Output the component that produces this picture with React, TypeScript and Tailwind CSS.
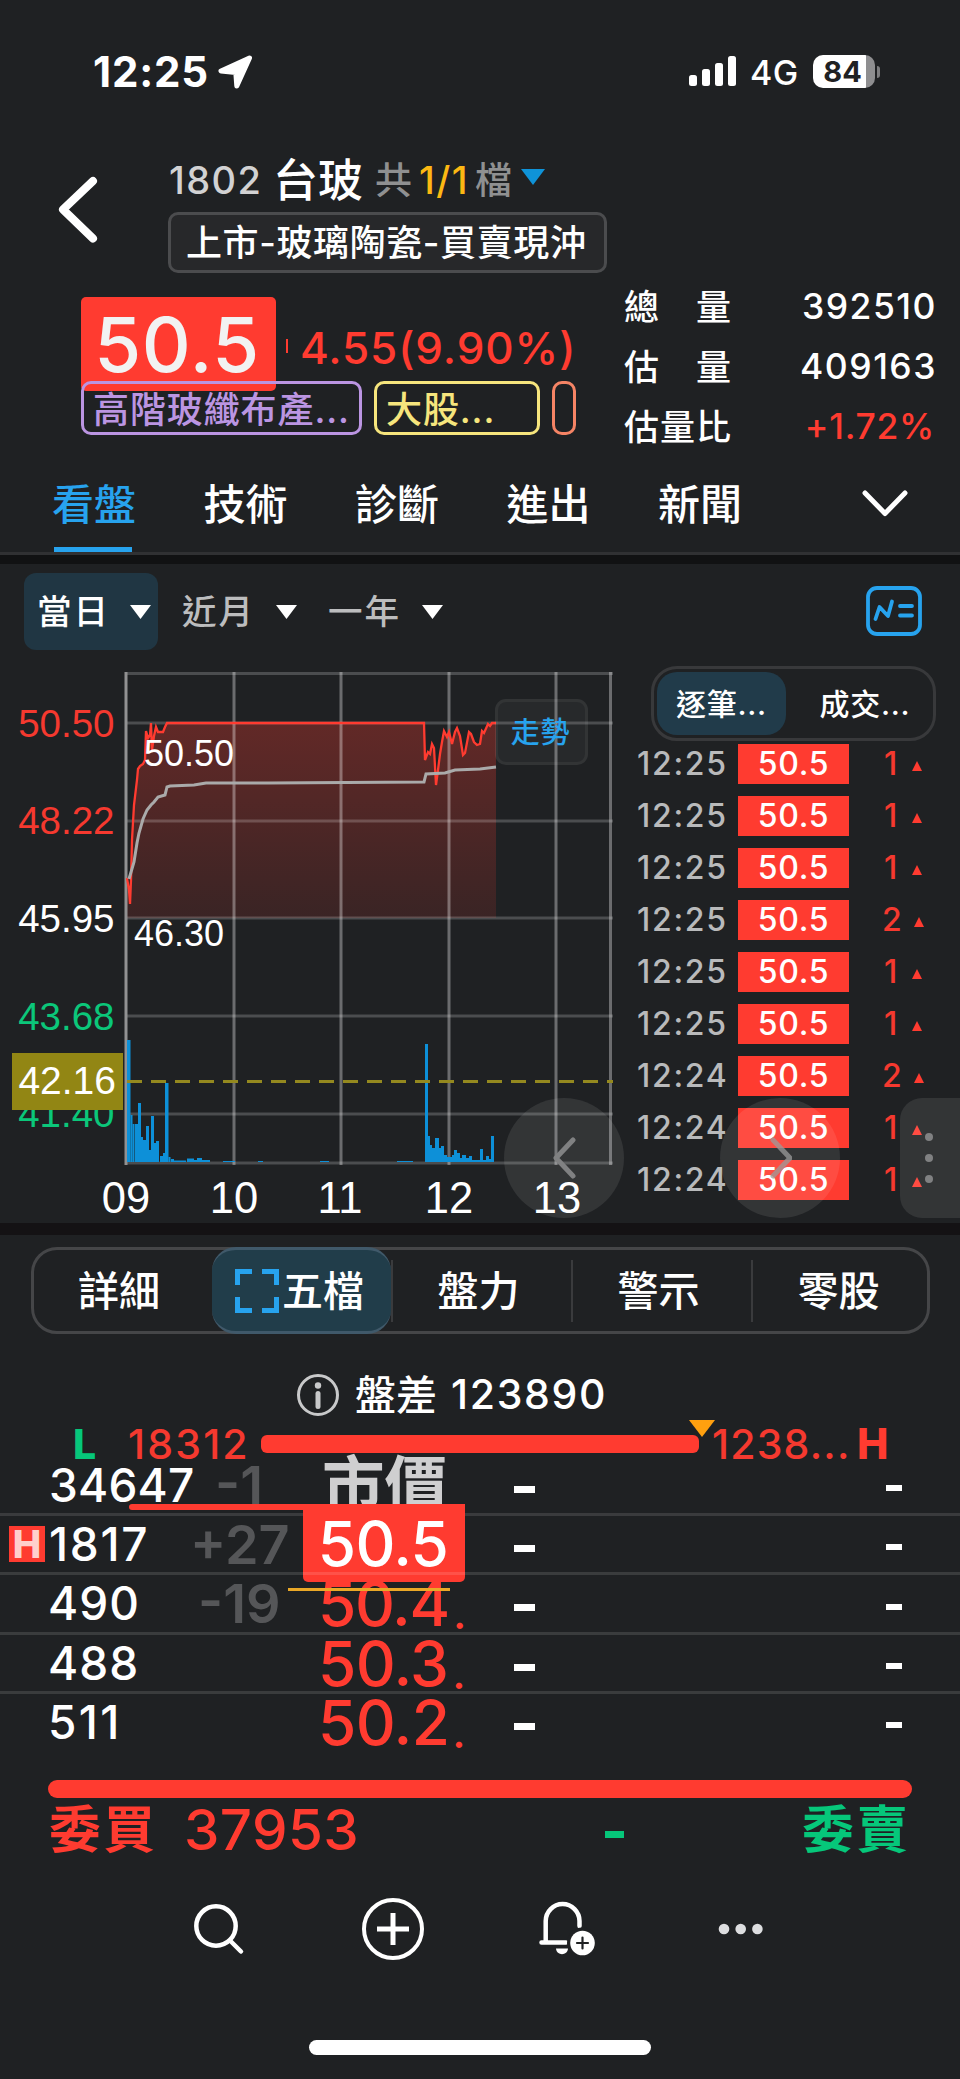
import type { ReactNode } from "react";

const SANS = "font-['Inter','Noto_Sans_CJK_TC',sans-serif]";

function Triangle({ className, up = false }: { className: string; up?: boolean }) {
  return (
    <svg viewBox="0 0 10 10" preserveAspectRatio="none" className={className} fill="currentColor">
      <path d={up ? "M0 10H10L5 0Z" : "M0 0H10L5 10Z"} />
    </svg>
  );
}

function StatusBar() {
  return (
    <div className="flex h-[143px] items-center pl-[93px] text-white">
      <span className="w-[125px] text-[42px] font-bold tracking-[0.8px]">12:25</span>
      <svg viewBox="0 0 36 35" className="h-[35px] w-[36px]" fill="#fff" stroke="#fff" strokeWidth="5" strokeLinejoin="round">
        <path d="M31.500 4L3 17L17.800 18.500L18.800 32Z" />
      </svg>
      <svg viewBox="0 0 48 31" className="ml-[435px] h-[31px] w-[48px]" fill="#fff">
        <rect x="0" y="19" width="8" height="11" rx="2.500" />
        <rect x="13" y="13" width="8" height="17" rx="2.500" />
        <rect x="26" y="7" width="8" height="23" rx="2.500" />
        <rect x="39" y="0" width="8" height="30" rx="2.500" />
      </svg>
      <span className="ml-[13px] w-[63px] pt-[2px] text-[34px] font-medium tracking-[0.4px]">4G</span>
      <div className="flex h-[33px] w-[62px] items-center justify-center overflow-hidden rounded-[10px] bg-[linear-gradient(90deg,#fff_85%,#8e8e90_85%)] text-[29px] font-bold text-[#1f2123]">
        <span className="-ml-[3px] leading-[33px]">84</span>
      </div>
      <div className="ml-[2px] h-[12px] w-[3px] rounded-r-full bg-[#7d7d7f]" />
    </div>
  );
}

function StockHeader() {
  return (
    <div className="flex h-[133px] pl-[57px]">
      <svg viewBox="0 0 42 68" className="mt-[33px] h-[68px] w-[42px]" fill="none" stroke="#fff" strokeWidth="8" strokeLinecap="round" strokeLinejoin="round">
        <path d="M36 5L6 33.500L36 62.500" />
      </svg>
      <div className="ml-[69px] pt-[6px]">
        <div className="flex h-[63px] items-center whitespace-nowrap">
          <span className="w-[105px] pl-[1px] text-[38px] font-medium tracking-[1.400px] text-[#d2d2d3]">1802</span>
          <span className="w-[102px] text-[45px] font-medium text-white">台玻</span>
          <span className="w-[44px] text-[37px] font-medium text-[#8f9091]">共</span>
          <span className="w-[56px] text-[38px] font-medium tracking-[1.500px] text-[#fcb813]">1/1</span>
          <span className="w-[46px] text-[37px] font-medium text-[#8f9091]">檔</span>
          <Triangle className="mb-[8px] h-[16px] w-[24px] text-[#0f93d8]" />
        </div>
        <div className="flex h-[61px] w-[439px] items-center rounded-[10px] border-[3px] border-[#4b4c4e] bg-[#27282a] pt-px pl-[15px] text-[36px] font-medium tracking-[0.6px] whitespace-nowrap text-white">
          上市-玻璃陶瓷-買賣現沖
        </div>
      </div>
    </div>
  );
}

function Stat({ label, value, red }: { label: ReactNode; value: string; red?: boolean }) {
  return (
    <div className="flex h-[60px] items-center justify-between pt-px text-[35.500px] font-medium whitespace-nowrap text-white">
      <span className="flex w-[107px] justify-between pt-[2px] text-[35px]">{label}</span>
      <span className={red ? "tracking-[0.7px] text-[#ff3b30]" : "-mr-[2px] tracking-[1.500px]"}>{value}</span>
    </div>
  );
}

function Quote() {
  return (
    <div className="flex h-[180px] pl-[81px]">
      <div className="w-[543px] pt-[21px]">
        <div className="flex">
          <div className="flex h-[94px] w-[195px] items-center justify-center rounded-[5px] bg-[#ff3b30] pr-[3px] text-[76px] font-medium tracking-[0.6px] text-[#f2f2f2]">50.5</div>
          <div className="mt-[42px] ml-[10px] h-[14px] w-[2px] bg-[#ff3b30]" />
          <span className="mt-[29px] ml-[12px] text-[44px] leading-[44px] font-medium tracking-[0.900px] text-[#ff3b30]">4.55(9.90%)</span>
        </div>
        <div className="relative -mt-[10px] flex text-[36px] font-medium tracking-[0.9px] whitespace-nowrap">
          <div className="flex h-[54px] w-[281px] items-center rounded-[10px] border-[3px] border-[#bb95e2] pt-[3px] pl-[9px] text-[#bb95e2]">高階玻纖布產...</div>
          <div className="ml-[12px] flex h-[54px] w-[166px] items-center rounded-[10px] border-[3px] border-[#f6e57d] pt-[3px] pl-[9px] text-[#f6e57d]">大股...</div>
          <div className="ml-[12px] h-[54px] w-[24px] rounded-[10px] border-[3px] border-[#f58465]" />
        </div>
      </div>
      <div className="w-[311px]">
        <Stat label={<><span>總</span><span>量</span></>} value="392510" />
        <Stat label={<><span>估</span><span>量</span></>} value="409163" />
        <Stat label={<span className="tracking-[1px]">估量比</span>} value="+1.72%" red />
      </div>
    </div>
  );
}

function MainTabs() {
  return (
    <div className="border-b-[9px] border-[#111213]">
      <div className="flex h-[99px] items-center border-b-[3px] border-[#303133] pl-[52px] text-[42px] font-medium text-white">
        <div className="relative flex h-[96px] w-[151.500px] items-center pt-px text-[#27a3ee]">
          看盤
          <div className="absolute bottom-0 left-[2px] h-[5px] w-[78px] bg-[#27a3ee]" />
        </div>
        {["技術", "診斷", "進出", "新聞"].map((t) => (
          <div key={t} className="w-[151.500px] pt-px">{t}</div>
        ))}
        <svg viewBox="0 0 46 28" className="ml-[52px] h-[28px] w-[46px]" fill="none" stroke="#fff" strokeWidth="5" strokeLinecap="round" strokeLinejoin="round">
          <path d="M3 3L23 23.500L43 3" />
        </svg>
      </div>
    </div>
  );
}

const PRICE_LINE =
  "M127 878L129 890L130 904L131 880L132 840L134 805L137 780L138 769L140 766L143 764L145 760L146 731L148 738L150 735L151 723L152 750L154 736L156 727L158 732L163 732L165 727L167 723H424L425 760L428 752L430 754L432 744L434 748L436 785L438 770L440 754L442 742L444 731L447 737L449 732L452 744L455 732L457 728L460 736L463 755L465 753L469 732L471 734L474 742L477 745L480 744L482 731L484 733L488 724L490 726L492 723H496";
const AVG_LINE =
  "M129 879L134 862L137 843L139 833L143 819L147 810L151 805L154 802L158 797L165 795L167 787L170 786L194 785L206 783L268 783L424 782L426 774L445 773L455 770L480 769L496 767";

const VOLUME: [number, number, number][] = [
  [127, 3.5, 122], [130.500, 2, 47], [132.500, 2, 38], [135, 3, 38], [138, 3, 59], [141, 2, 25],
  [143, 3, 22], [146, 3, 36], [149, 2, 12], [151, 3, 46], [154, 2, 19], [156, 3, 21],
  [160, 3, 6], [163, 2, 9], [165, 3.5, 79], [168.500, 2, 5], [171, 3, 3], [174, 12, 1.500],
  [187, 7, 3.500], [194, 3, 2], [197, 5, 4], [202, 8, 2], [223, 12, 1], [258, 5, 1],
  [320, 9, 1], [397, 16, 1], [425, 3, 118], [428, 2, 26], [430, 2, 17], [432, 3, 14],
  [435, 4, 24], [439, 2, 14], [441, 3, 16], [444, 3, 7], [447, 5, 5], [452, 2, 7],
  [454, 3, 12], [457, 3, 9], [460, 2, 4], [462, 4, 7], [466, 3, 4], [469, 3, 6], [472, 8, 2],
  [480, 3, 13], [483, 3, 2], [486, 3, 6], [489, 2, 3], [491, 3, 26],
];

function Chart() {
  return (
    <svg viewBox="0 660 620 563" className="block h-[563px] w-[620px] font-['Liberation_Sans',sans-serif]">
      <defs>
        <linearGradient id="area" x1="0" y1="723" x2="0" y2="918" gradientUnits="userSpaceOnUse">
          <stop offset="0" stopColor="#ff3b30" stopOpacity=".3" />
          <stop offset="1" stopColor="#ff3b30" stopOpacity=".12" />
        </linearGradient>
      </defs>
      <path d={`${PRICE_LINE}V918H127Z`} fill="url(#area)" />
      <path d="M126 673.500H613M126 723H613M126 821H613M126 918H613M126 1016H613M126 1114H613M126 1163H613" stroke="#fff" strokeOpacity=".2" strokeWidth="3" />
      <path d="M234 672V1165M341 672V1165M449 672V1165M556 672V1165M610.500 672V1165" stroke="#fff" strokeOpacity=".34" strokeWidth="3" />
      <path d="M126 672V1165" stroke="#919192" strokeWidth="3" />
      {VOLUME.map(([x, w, h]) => (
        <rect key={x} x={x} y={1162 - h} width={w} height={h} fill="#0d90d8" />
      ))}
      <path d="M127 1081.500H613" stroke="#94891f" strokeWidth="3" strokeDasharray="15 9" />
      <path d={PRICE_LINE} fill="none" stroke="#ff3b30" strokeWidth="2.300" />
      <path d={AVG_LINE} fill="none" stroke="#aaa" strokeWidth="3" />
      <g fontSize="38.500" textAnchor="end">
        <text x="114.500" y="736.500" fill="#f5392f">50.50</text>
        <text x="114.500" y="833.500" fill="#f5392f">48.22</text>
        <text x="114.500" y="931.500" fill="#fff">45.95</text>
        <text x="114.500" y="1029.500" fill="#0bc77a">43.68</text>
        <text x="114.500" y="1126.500" fill="#0bc77a">41.40</text>
      </g>
      <path d="M12 1053H123V1110H12Z" fill="#928614" />
      <text x="116" y="1094" fontSize="39" textAnchor="end" fill="#fff">42.16</text>
      <g fontSize="36" fill="#fff">
        <text x="144" y="765.500">50.50</text>
        <text x="134" y="945.500">46.30</text>
      </g>
      <g fontSize="43.500" fill="#fff" textAnchor="middle">
        <text x="126" y="1213">09</text>
        <text x="234" y="1213">10</text>
        <text x="340" y="1213">11</text>
        <text x="449" y="1213">12</text>
        <text x="557" y="1213">13</text>
      </g>
    </svg>
  );
}

const TICKS: [string, number][] = [
  ["12:25", 1], ["12:25", 1], ["12:25", 1], ["12:25", 2], ["12:25", 1],
  ["12:25", 1], ["12:24", 2], ["12:24", 1], ["12:24", 1],
];

function Ticks() {
  return (
    <div className="mt-[3px] grid gap-[12px] text-[32px] leading-[40px] font-medium">
      {TICKS.map(([time, qty], i) => (
        <div key={i} className="flex h-[40px] items-center">
          <span className="w-[103px] pl-[2px] text-[32px] tracking-[1.700px] text-[#b9babb]">{time}</span>
          <span className="h-[40px] w-[111px] bg-[#ff3b30] text-center text-[32px] tracking-[0.7px] text-white">50.5</span>
          <span className={`text-[#f5392f] ${qty === 1 ? "ml-[35px] w-[28px]" : "ml-[33px] w-[32px]"}`}>{qty}</span>
          <Triangle up className="mt-[4px] h-[10px] w-[10px] text-[#ff3b30]" />
        </div>
      ))}
    </div>
  );
}

function Market() {
  return (
    <div className="relative flex h-[659px]">
      <div className="w-[620px]">
        <div className="flex h-[96px] items-start pt-[9px] pl-[24px] text-[34.500px] font-medium tracking-[2px] text-[#bcbdbe]">
          <div className="flex h-[77px] w-[134px] items-center rounded-[12px] bg-[#203643] pl-[13px] text-white">
            <span className="w-[93px] pt-px">當日</span>
            <Triangle className="h-[14px] w-[21px]" />
          </div>
          <div className="ml-[24px] flex h-[77px] w-[146px] items-center">
            <span className="w-[94px] pt-px">近月</span>
            <Triangle className="h-[14px] w-[21px] text-white" />
          </div>
          <div className="flex h-[77px] items-center">
            <span className="w-[94px] pt-px">一年</span>
            <Triangle className="h-[14px] w-[21px] text-white" />
          </div>
        </div>
        <Chart />
      </div>
      <div className="w-[340px] pt-[22px] pl-[15px]">
        <svg viewBox="0 0 56 50" className="ml-[231px] h-[50px] w-[56px]" fill="none" stroke="#27a3ee" strokeWidth="3.800" strokeLinecap="round" strokeLinejoin="round">
          <rect x="2" y="2" width="52" height="46" rx="9" />
          <path d="M9.500 33L13.500 21L22 30L26 15.500M34 20H46M34 29.500H46" />
        </svg>
        <div className="mt-[30px] ml-[16px] flex h-[75px] w-[285px] rounded-[26px] border-[3px] border-[#38393b] p-[3px] text-[30px] font-medium tracking-[0.7px] text-white">
          <div className="flex h-[63px] w-[129px] items-center justify-center rounded-[20px] bg-[#213b4a] pt-[2px]">逐筆...</div>
          <div className="flex flex-1 items-center justify-center pt-[2px] pl-[14px]">成交...</div>
        </div>
        <Ticks />
      </div>

      <div className="absolute top-[135px] left-[495px] flex h-[66px] w-[93px] items-center justify-center rounded-[11px] border-[3px] border-white/5 bg-white/4 pt-[2px] pr-[2px] text-[29px] font-medium tracking-[0.8px] text-[#27a3ee]">走勢</div>
      <div className="absolute top-[534px] left-[504px] flex h-[120px] w-[120px] items-center justify-center rounded-full bg-white/9">
        <svg viewBox="0 0 24 42" className="h-[42px] w-[24px]" fill="none" stroke="#808182" strokeWidth="5" strokeLinecap="round" strokeLinejoin="round"><path d="M21 3L4 21L21 39" /></svg>
      </div>
      <div className="absolute top-[534px] left-[720px] flex h-[120px] w-[120px] items-center justify-center rounded-full bg-white/9">
        <svg viewBox="0 0 24 42" className="h-[42px] w-[24px]" fill="none" stroke="#9b9b9b" strokeOpacity=".75" strokeWidth="5" strokeLinecap="round" strokeLinejoin="round"><path d="M5 3L22 21L5 39" /></svg>
      </div>
      <div className="absolute top-[534px] right-0 flex h-[120px] w-[60px] flex-col items-center justify-center gap-[13px] rounded-l-[22px] bg-white/9 pr-[2px]">
        <i className="h-[8px] w-[8px] rounded-full bg-[#808182]" />
        <i className="h-[8px] w-[8px] rounded-full bg-[#808182]" />
        <i className="h-[8px] w-[8px] rounded-full bg-[#808182]" />
      </div>
    </div>
  );
}

function DepthTabs() {
  return (
    <div className="mt-[12px] ml-[31px] flex h-[87px] w-[899px] items-center rounded-[26px] border-[3px] border-[#454648] text-[41px] font-medium text-white">
      <div className="flex w-[178px] shrink-0 justify-center pt-[2px] pr-[8px]">詳細</div>
      <div className="-my-[3px] flex h-[87px] w-[179px] shrink-0 items-center justify-center rounded-[24px] border-y-[3px] border-[#40596a] bg-[#213d4a] pr-[4px]">
        <svg viewBox="0 0 44 44" className="mr-[3px] h-[44px] w-[44px]" fill="none" stroke="#27a3ee" strokeWidth="5">
          <path d="M2.500 16V2.500H17M27 2.500H41.500V16M41.500 28V41.500H27M17 41.500H2.500V28" />
        </svg>
        <span className="pt-[2px]">五檔</span>
      </div>
      {["盤力", "警示", "零股"].map((t) => (
        <div key={t} className="flex h-[62px] w-[180px] shrink-0 items-center justify-center border-l-[2px] border-[#3a3b3d] pt-[2px] pr-[7px]">{t}</div>
      ))}
    </div>
  );
}

function Spread() {
  return (
    <>
      <div className="mt-[31px] flex h-[60px] items-center pl-[296px] text-white">
        <svg viewBox="0 0 44 44" className="h-[44px] w-[44px]">
          <circle cx="22" cy="22" r="19.500" fill="none" stroke="#c8c9ca" strokeWidth="3" />
          <circle cx="22" cy="12.500" r="3.200" fill="#c8c9ca" />
          <path d="M22 20.500V33.500" stroke="#c8c9ca" strokeWidth="5" strokeLinecap="round" />
        </svg>
        <span className="ml-[15px] w-[96px] pt-px text-[41px] font-medium">盤差</span>
        <span className="text-[41px] font-medium tracking-[1.700px]">123890</span>
      </div>
      <div className="relative flex h-[38px] items-center pl-[73px] text-[41px] leading-[38px] font-medium text-[#f5392f]">
        <span className="w-[55px] font-extrabold text-[#06c77a]">L</span>
        <span className="w-[133px] tracking-[2.200px]">18312</span>
        <div className="h-[18px] w-[438px] rounded-[6px] bg-[#ff3b30]" />
        <span className="ml-[13px] w-[145px] tracking-[1.200px]">1238...</span>
        <span className="text-[42px] font-extrabold text-[#ff3b30]">H</span>
        <Triangle className="absolute top-[-5px] left-[689px] h-[17px] w-[26px] text-[#ffa00f]" />
      </div>
    </>
  );
}

const BIDS = [
  { vol: "34647", diff: "-1", price: "市價" },
  { vol: "1817", diff: "+27", price: "50.5" },
  { vol: "490", diff: "-19", price: "50.4" },
  { vol: "488", diff: "", price: "50.3" },
  { vol: "511", diff: "", price: "50.2" },
];

const VOL_STYLE = ["pl-[1px] tracking-[0.2px]", "pl-[1px] tracking-[1.700px]", "tracking-[1px]", "tracking-[1px]", "tracking-[2.400px]"];
const DIFF_STYLE = ["pl-[17px]", "-ml-[8px] mr-[8px]", "", "", ""];

function Depth() {
  return (
    <div className="relative mt-[-14px] flex h-[316px] flex-col pt-[6.500px]">
      {BIDS.map((b, i) => (
        <div key={b.vol} className="flex h-[59.300px] items-center font-medium text-white">
          <div className="flex w-[48px] shrink-0 items-center pl-[9px]">
            {i === 1 && <span className="flex h-[36px] w-[36px] items-center justify-center bg-[#ff3b30] text-[38px] font-extrabold text-[#ffd0cd]">H</span>}
          </div>
          <span className={`w-[150px] shrink-0 text-[46px] ${VOL_STYLE[i]}`}>{b.vol}</span>
          <span className={`flex h-[59px] w-[112px] shrink-0 items-center text-[54px] leading-[59px] font-semibold text-[#555658] ${DIFF_STYLE[i]}`}>{b.diff}</span>
          {i === 0 && <span className="w-[190px] shrink-0 pl-[12px] text-[62.500px] leading-[59px] font-bold text-[#cfcfd0]">{b.price}</span>}
          {i === 1 && <span className="w-[190px] shrink-0" />}
          {i > 1 && (
            <span className={`mr-[35px] flex h-[59px] w-[155px] shrink-0 items-center overflow-hidden pl-[8px] text-[62px] leading-[59px] text-[#ff3b30] ${i === 2 ? "tracking-[-1.300px]" : "tracking-[-0.600px]"}`}>
              <span className="w-[142px]">{b.price}</span>
              <span className="mt-[19px] text-[44px] leading-[20px]">.</span>
            </span>
          )}
          <span className="mt-[8px] ml-[14px] h-[7px] w-[21px] bg-white" />
          <span className="mt-[6px] ml-[351px] h-[6px] w-[16px] bg-white" />
        </div>
      ))}
      <div className="absolute top-[55px] left-[129px] h-[6px] w-[176px] rounded-l-[3px] bg-[#ff3b30]" />
      <div className="absolute top-[139px] left-[288px] h-[3px] w-[162px] bg-[#eaa827]" />
      <div className="absolute top-[55px] left-[303px] flex h-[78px] w-[162px] items-center justify-center rounded-b-[5px] bg-[#ff3b30] pt-[1px] pr-[2px] text-[62px] font-medium tracking-[-0.600px] text-white">50.5</div>
      <div className="absolute top-[64px] left-0 h-[3px] w-[303px] bg-[#3a3b3d]" />
      <div className="absolute top-[64px] left-[465px] h-[3px] w-[495px] bg-[#3a3b3d]" />
      <div className="absolute top-[123px] left-0 h-[3px] w-full bg-white/12" />
      <div className="absolute top-[183px] left-0 h-[3px] w-full bg-white/12" />
      <div className="absolute top-[242px] left-0 h-[3px] w-full bg-white/12" />
    </div>
  );
}

function Totals() {
  return (
    <>
      <div className="mt-[15px] ml-[48px] h-[18px] w-[864px] rounded-full bg-[#ff3b30]" />
      <div className="flex h-[64px] items-center pl-[49px] text-[56.500px] font-medium text-[#ff3b30]">
        <span className="w-[135px] text-[51.500px] font-bold tracking-[3px]">委買</span>
        <span className="w-[421px] tracking-[0.400px]">37953</span>
        <span className="mt-[8px] h-[7px] w-[19px] bg-[#06c77a]" />
        <span className="ml-[178px] text-[51.500px] font-bold tracking-[3px] whitespace-nowrap text-[#06c77a]">委賣</span>
      </div>
    </>
  );
}

function BottomBar() {
  return (
    <div className="flex h-[134px] items-center pl-[190px]">
      <svg viewBox="0 0 56 56" className="h-[56px] w-[56px]" fill="none" stroke="#fff" strokeWidth="4.500" strokeLinecap="round">
        <circle cx="26" cy="25" r="19.700" />
        <path d="M40 39.500L51 50.500" />
      </svg>
      <svg viewBox="0 0 64 64" className="ml-[115px] h-[64px] w-[64px]" fill="none" stroke="#fff">
        <circle cx="32" cy="32" r="29" strokeWidth="4" />
        <path d="M16 32H48M32 16V48" strokeWidth="5" />
      </svg>
      <svg viewBox="0 0 60 60" className="ml-[112px] h-[60px] w-[60px]" fill="none" stroke="#fff" strokeWidth="4.500" strokeLinecap="round">
        <path d="M42.500 27V22A16.900 16.900 0 0 0 8.700 22V43M4.500 43.500H29" />
        <path d="M19 49.500H31C30.500 57 19.500 57 19 49.500Z" fill="#fff" stroke="none" />
        <circle cx="45.500" cy="44" r="15.500" fill="#1f2123" stroke="none" />
        <circle cx="45.500" cy="44" r="12.300" fill="#fff" stroke="none" />
        <path d="M40 44H51M45.500 38.500V49.500" stroke="#1f2123" strokeWidth="2.200" />
      </svg>
      <svg viewBox="0 0 46 12" className="ml-[121px] h-[12px] w-[46px]" fill="#dddee0">
        <circle cx="6" cy="6" r="5.300" />
        <circle cx="22.700" cy="6" r="5.300" />
        <circle cx="39.400" cy="6" r="5.300" />
      </svg>
    </div>
  );
}

export default function App() {
  return (
    <div className={`h-[2079px] w-[960px] overflow-hidden bg-[#1f2123] ${SANS}`}>
      <StatusBar />
      <StockHeader />
      <Quote />
      <MainTabs />
      <Market />
      <div className="h-[12px] bg-[#141214]" />
      <DepthTabs />
      <Spread />
      <Depth />
      <Totals />
      <BottomBar />
      <div className="mt-[44px] ml-[309px] h-[15px] w-[342px] rounded-[8px] bg-white" />
    </div>
  );
}
